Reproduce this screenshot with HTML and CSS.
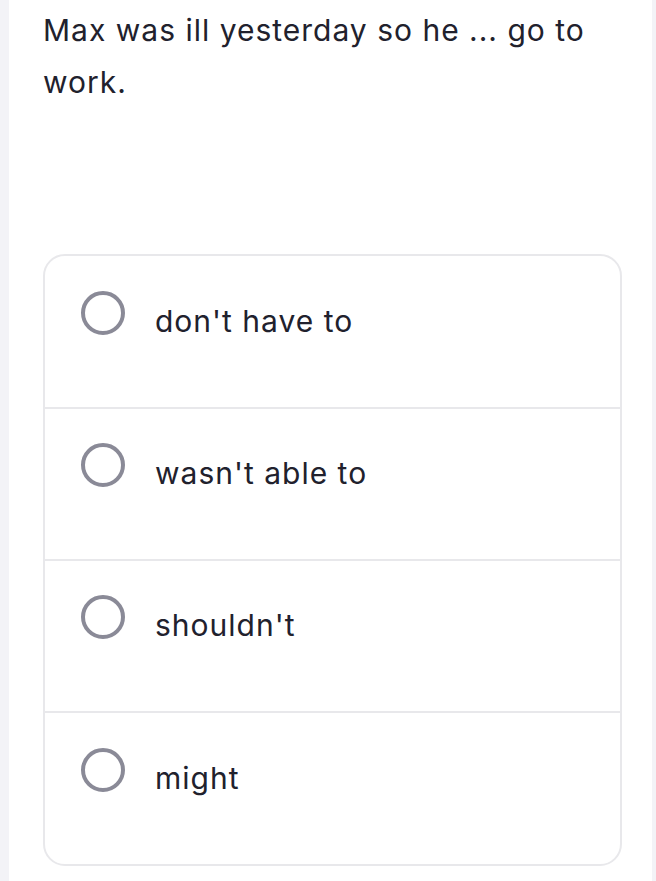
FILE: index.html
```html
<!DOCTYPE html>
<html>
<head>
<meta charset="utf-8">
<link rel="stylesheet" href="styles.css">
</head>
<body>
<main class="panel">
  <p class="question">Max was ill yesterday so he ... go to work.</p>
  <ul class="options">
    <li class="option"><span class="radio"></span><span class="label">don't have to</span></li>
    <li class="option"><span class="radio"></span><span class="label">wasn't able to</span></li>
    <li class="option"><span class="radio"></span><span class="label">shouldn't</span></li>
    <li class="option"><span class="radio"></span><span class="label">might</span></li>
  </ul>
</main>
</body>
</html>
```
FILE: styles.css
```css
html, body {
  margin: 0;
  padding: 0;
  height: 100%;
}
body {
  background: #f3f3f7;
  font-family: Inter, "Noto Sans", sans-serif;
  color: #21212d;
}
.panel {
  background: #ffffff;
  margin: 0 4px 0 9px;
  padding: 0 30px 0 34px;
  min-height: 100%;
  box-sizing: border-box;
  overflow: hidden;
}
.question {
  margin: 4px 0 0 0;
  font-size: 30px;
  letter-spacing: 1px;
  line-height: 52px;
  padding-right: 20px;
}
.options {
  list-style: none;
  margin: 146px 0 0 0;
  padding: 0;
  border: 2px solid #e8e8eb;
  border-radius: 22px;
  overflow: hidden;
}
.option {
  display: flex;
  align-items: center;
  height: 152px;
  padding-left: 36px;
  border-top: 2px solid #e8e8eb;
  box-sizing: border-box;
}
.option:first-child {
  border-top: none;
  height: 151px;
}
.option:last-child {
  height: 153px;
}
.radio {
  width: 44px;
  height: 44px;
  border: 4px solid #8a8a97;
  border-radius: 50%;
  box-sizing: border-box;
  flex: none;
  margin-top: -38px;
}
.label {
  margin-left: 30px;
  font-size: 30px;
  letter-spacing: 1px;
  margin-top: -22px;
}
```
